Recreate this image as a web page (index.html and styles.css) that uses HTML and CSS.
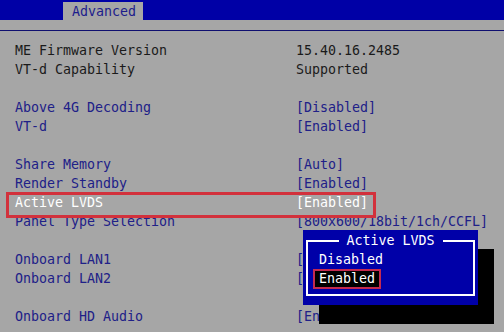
FILE: index.html
```html
<!DOCTYPE html>
<html lang="en">
<head>
  <meta charset="UTF-8">
  <title>Advanced</title>
  <link rel="stylesheet" href="styles.css">
</head>
<body>
  <header class="topbar">
    <div class="tab">Advanced</div>
  </header>
  <div class="rule"></div>

  <main class="settings">
    <div class="group">
      <div class="row info"><span class="name">ME Firmware Version</span><span class="value">15.40.16.2485</span></div>
      <div class="row info"><span class="name">VT-d Capability</span><span class="value">Supported</span></div>
    </div>
    <div class="group">
      <div class="row"><span class="name">Above 4G Decoding</span><span class="value">[Disabled]</span></div>
      <div class="row"><span class="name">VT-d</span><span class="value">[Enabled]</span></div>
    </div>
    <div class="group">
      <div class="row"><span class="name">Share Memory</span><span class="value">[Auto]</span></div>
      <div class="row"><span class="name">Render Standby</span><span class="value">[Enabled]</span></div>
      <div class="row selected"><span class="name">Active LVDS</span><span class="value">[Enabled]</span></div>
      <div class="row"><span class="name">Panel Type Selection</span><span class="value">[800x600/18bit/1ch/CCFL]</span></div>
    </div>
    <div class="group">
      <div class="row"><span class="name">Onboard LAN1</span><span class="value">[Enabled]</span></div>
      <div class="row"><span class="name">Onboard LAN2</span><span class="value">[Enabled]</span></div>
    </div>
    <div class="group">
      <div class="row"><span class="name">Onboard HD Audio</span><span class="value">[Enabled]</span></div>
    </div>
  </main>

  <!-- option popup for the selected item -->
  <div class="popup">
    <div class="frame">
      <div class="frame-title">Active LVDS</div>
      <div class="option">Disabled</div>
      <div class="option"><span class="current">Enabled</span></div>
    </div>
  </div>
</body>
</html>
```

FILE: styles.css
```css
* {
  box-sizing: border-box;
}
body {
  margin: 0;
  width: 504px;
  height: 332px;
  overflow: hidden;
  position: relative;
  background: #a6a6a6;
  font-family: "DejaVu Sans Mono", "Liberation Mono", monospace;
  font-size: 13.3px;
  line-height: 19px;
  color: #202088;
}
.topbar {
  height: 20px;
  background: #0000a6;
  display: flex;
  align-items: flex-end;
  padding-left: 63px;
}
.tab {
  height: 18px;
  width: 80px;
  padding-left: 9px;
  line-height: 19px;
  background: #a6a6a6;
  color: #1c1c8c;
}
.rule {
  margin-top: 10px;
  height: 1px;
  background: #101070;
}
.settings {
  padding: 10px 0 0 15px;
}
.group {
  margin-bottom: 19px;
}
.row {
  display: grid;
  grid-template-columns: 281px auto;
  height: 19px;
  white-space: nowrap;
}
.info {
  color: #1a1a1a;
}
.selected {
  position: relative;
  color: #ffffff;
}
.selected::after {
  content: "";
  position: absolute;
  left: -9px;
  top: -1px;
  width: 364px;
  height: 20px;
  border: 3px solid #d2313c;
}
.popup {
  position: absolute;
  left: 303px;
  top: 230px;
  width: 175px;
  height: 75px;
  background: #0000a8;
  box-shadow: 16px 19px 0 #000000;
  padding: 10px 3px 9px 3px;
  color: #ffffff;
}
.frame {
  position: relative;
  height: 100%;
  border: 2px solid #ffffff;
  padding-top: 8px;
}
.frame-title {
  position: absolute;
  top: -9px;
  left: 0;
  right: 0;
  margin: 0 auto;
  width: 104px;
  line-height: 15px;
  text-align: center;
  background: #0000a8;
}
.option {
  height: 19px;
  padding-left: 11px;
}
.option .current {
  display: inline-block;
  margin-left: -6px;
  padding: 0 4px;
  line-height: 16px;
  background: #000000;
  border: 2px solid #c42a50;
}
```
